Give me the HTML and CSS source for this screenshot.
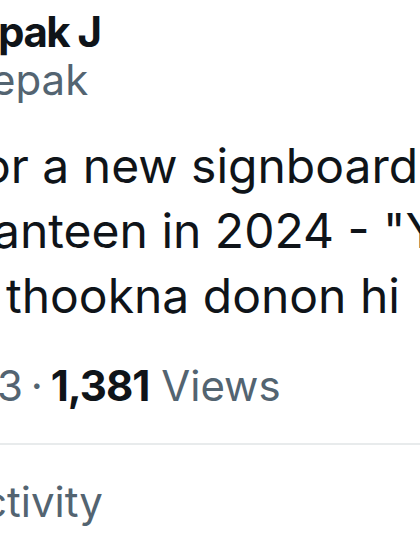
FILE: index.html
```html
<!DOCTYPE html>
<html lang="en">
<head>
    <meta charset="UTF-8">
    <title>Tweet</title>
    <link rel="stylesheet" href="styles.css">
</head>
<body>

<div class="tweet">
    <div class="author">
        <div class="name name-cut">pak J</div>
        <div class="handle handle-cut">epak</div>
    </div>

    <div class="text">
        <div class="line line-1">or a new signboard at the</div>
        <div class="line line-2">anteen in 2024 - "Yahan</div>
        <div class="line line-3">thookna donon hi</div>
    </div>

    <div class="meta">
        <span class="meta-cut">3</span>
        <span class="dot">·</span>
        <span class="views">1,381</span>
        <span class="views-label">Views</span>
    </div>

    <div class="activity">
        <span class="activity-cut">ctivity</span>
    </div>
</div>

</body>
</html>
```

FILE: styles.css
```css
body {
    margin: 0;
    background: #ffffff;
    color: #0f1419;
}

.tweet {
    width: 420px;
    height: 560px;
    overflow: hidden;
    font-family: Inter, "Noto Sans", sans-serif;
    white-space: nowrap;
}

.author {
    padding-top: 8px;
    font-size: 42px;
    line-height: 48px;
}
.name {
    font-weight: 700;
    letter-spacing: -1.5px;
}
.name-cut {
    margin-left: -2px;
}
.handle {
    color: #536471;
}
.handle-cut {
    margin-left: -9px;
}

.text {
    margin-top: 29px;
    font-size: 48px;
    line-height: 65px;
}
.line-1 {
    margin-left: -18px;
}
.line-2 {
    margin-left: -7px;
}
.line-3 {
    margin-left: 6px;
}

.meta {
    margin-top: 30px;
    font-size: 42px;
    line-height: 56px;
    color: #536471;
    padding-bottom: 29px;
    border-bottom: 2px solid #e8ebec;
}
.meta-cut {
    margin-left: -3px;
}
.dot {
    margin: 0 -4px;
}
.views {
    color: #0f1419;
    font-weight: 700;
    letter-spacing: -1px;
}

.activity {
    margin-top: 29px;
    font-size: 42px;
    line-height: 56px;
    color: #536471;
}
.activity-cut {
    margin-left: -17px;
}
```
